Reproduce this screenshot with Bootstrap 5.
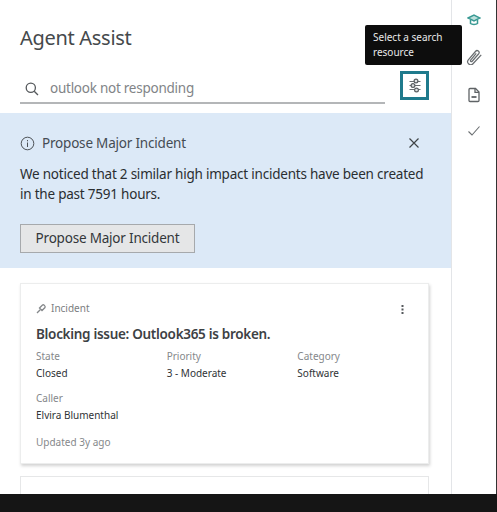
<!DOCTYPE html>
<html lang="en">
  <head>
    <meta charset="UTF-8" />
    <title>Agent Assist</title>
    <link rel="stylesheet" href="https://cdn.jsdelivr.net/npm/bootstrap@5.3.0/dist/css/bootstrap.min.css" />
    <style>
      html, body { height: 512px; overflow: hidden; background: #fff; }
      body { font-family: "Noto Sans", "Open Sans", sans-serif; color: #2f3436; }
      .frame { width: 497px; height: 494px; overflow: hidden; border-right: 1px solid #333; }
      .pane { width: 452px; height: 494px; border-right: 1px solid #e3e5e8; }
      .rail { width: 44px; padding-top: 13px; gap: 22px; }
      .rail svg { display: block; }
      .head { padding: 23px 20px 0; height: 113px; position: relative; }
      .title { font-size: 20px; line-height: 30px; color: #45494c; margin: 0; letter-spacing: -0.3px; }
      .searchrow { margin-top: 18px; gap: 15px; }
      .searchbox { width: 365px; height: 33px; border-bottom: 2px solid #b4b6b8; gap: 10px; padding-left: 4px; padding-top: 4px; }
      .searchtext { font-size: 13.5px; letter-spacing: -0.25px; color: #818487; }
      .filterbtn { width: 29px; height: 29px; border: 3px solid #1f7a8c; }
      .tip { position: absolute; left: 365px; top: 25px; width: 97px; height: 40px; background: #0d0d0d; border-radius: 2px; color: #e8e8e8; font-size: 10px; line-height: 15px; padding: 5px 8px; z-index: 2; }
      .banner { background: #dce9f7; height: 155px; padding: 20px 20px 0; }
      .bannerhead { font-size: 13.5px; letter-spacing: -0.2px; line-height: 20px; color: #454c53; gap: 7px; }
      .bannertext { font-size: 13.5px; line-height: 20px; margin: 11px 0 0; color: #2a2e31; width: 410px; letter-spacing: -0.22px; }
      .proposebtn { margin-top: 20px; width: 175px; height: 29px; padding: 0; background: #e5e6e7; border: 1px solid #a6a9ac; border-radius: 0; font-size: 13.5px; letter-spacing: -0.2px; color: #33373a; }
      .proposebtn:hover { background: #e5e6e7; }
      .closeicon { margin-right: 11px; }
      .cardbox { margin: 15px 0 0 20px; width: 409px; height: 181px; border: 1px solid #eceded; border-radius: 0; box-shadow: 1px 2px 3px rgba(0,0,0,.18); padding: 15px 15px 0; position: relative; }
      .nextbox { margin: 12px 0 0 20px; width: 409px; height: 40px; border: 1px solid #e6e7e8; border-radius: 0; }
      .kind { font-size: 10px; line-height: 18px; color: #7b7e81; gap: 4px; }
      .cardtitle { font-size: 13.5px; letter-spacing: -0.3px; line-height: 20px; font-weight: 600; margin: 7px 0 0; color: #3d4144; }
      .kebab { position: absolute; right: 24px; top: 21px; }
      .fields { margin-top: 4px; width: 392px; }
      .fieldcol { width: 131px; }
      .lbl { font-size: 10px; line-height: 16px; color: #85888b; }
      .val { font-size: 10px; line-height: 18px; color: #2f3336; }
      .updated { font-size: 10px; line-height: 16px; color: #85888b; margin-top: 10px; }
      .bottombar { height: 18px; background: #151515; }
    </style>
  </head>
  <body>
    <div class="frame d-flex">
      <main class="pane flex-shrink-0">
        <section class="head">
          <h1 class="title fw-normal">Agent Assist</h1>
          <div class="searchrow d-flex align-items-start">
            <div class="searchbox d-flex align-items-center">
              <svg width="16" height="16" viewBox="0 0 16 16" fill="none" stroke="#55595c" stroke-width="1.3">
                <circle cx="6.800" cy="6.800" r="4.600" />
                <path d="M10.200 10.200 14 14" />
              </svg>
              <span class="searchtext">outlook not responding</span>
            </div>
            <div class="filterbtn d-flex align-items-center justify-content-center">
              <svg width="14" height="15" viewBox="0 0 14 15" fill="none" stroke="#5a5e61" stroke-width="1.200">
                <path d="M1.500 3.500h11M1.500 7.500h11M1.500 11.500h11" stroke-width="0.900" />
                <circle cx="8" cy="3" r="1.900" fill="#dfe1e2" />
                <circle cx="5" cy="7.500" r="1.900" fill="#dfe1e2" />
                <circle cx="8.500" cy="12" r="1.900" fill="#dfe1e2" />
              </svg>
            </div>
          </div>
          <div class="tip">Select a search resource</div>
        </section>

        <section class="banner">
          <div class="bannerhead d-flex align-items-center">
            <svg width="15" height="15" viewBox="0 0 15 15" fill="none" stroke="#4e5358" stroke-width="1">
              <circle cx="7.500" cy="7.500" r="6.300" />
              <path d="M7.500 6.500v4.500M7.500 4v1.300" />
            </svg>
            <span class="flex-grow-1">Propose Major Incident</span>
            <svg class="closeicon" width="12" height="12" viewBox="0 0 12 12" fill="none" stroke="#3f4447" stroke-width="1.200">
              <path d="M1.500 1.500l9 9M10.500 1.500l-9 9" />
            </svg>
          </div>
          <p class="bannertext">We noticed that 2 similar high impact incidents have been created in the past 7591 hours.</p>
          <button type="button" class="btn proposebtn">Propose Major Incident</button>
        </section>

        <article class="card cardbox">
          <div class="kind d-flex align-items-center">
            <svg width="11" height="11" viewBox="0 0 11 11" fill="none" stroke="#85888b" stroke-width="1.300">
              <path d="M1 10l3.200-3.200" />
              <path d="M3.500 5 6.500 2c1-.8 3.300 1 2.500 2.500L6 7.500z" />
            </svg>
            <span>Incident</span>
          </div>
          <h2 class="cardtitle">Blocking issue: Outlook365 is broken.</h2>
          <svg class="kebab" width="3" height="9" viewBox="0 0 3 9" fill="#55595c">
            <rect x="0.500" y="0" width="2" height="2" />
            <rect x="0.500" y="3.500" width="2" height="2" />
            <rect x="0.500" y="7" width="2" height="2" />
          </svg>
          <div class="fields d-flex">
            <div class="fieldcol">
              <div class="lbl">State</div>
              <div class="val">Closed</div>
            </div>
            <div class="fieldcol">
              <div class="lbl">Priority</div>
              <div class="val">3 - Moderate</div>
            </div>
            <div class="fieldcol">
              <div class="lbl">Category</div>
              <div class="val">Software</div>
            </div>
          </div>
          <div class="mt-2">
            <div class="lbl">Caller</div>
            <div class="val">Elvira Blumenthal</div>
          </div>
          <div class="updated">Updated 3y ago</div>
        </article>
        <div class="card nextbox"></div>
      </main>

      <nav class="rail d-flex flex-column align-items-center">
        <svg width="14" height="14" viewBox="0 0 14 14" fill="none" stroke="#3a9a94" stroke-width="1.500">
          <path d="M1 5 7 2l6 3-6 3z" fill="#bfe0dc" />
          <path d="M3.500 7v3.500c1.500 1.300 5.500 1.300 7 0V7" />
        </svg>
        <svg width="16" height="16" viewBox="3 2 11 11.500" fill="none" stroke="#6a6e71" stroke-width="0.900">
          <path d="M13.700 6.200 7.600 12.800c-1.700 1.800-4.900-.9-3.200-3l5.300-6.200c1.100-1.300 3.300.4 2.200 1.800L7.200 10.800c-.6.700-1.600 0-1.100-.8l4-4.800" />
        </svg>
        <svg width="14" height="16" viewBox="0 0 14 16" fill="none" stroke="#5f6366" stroke-width="1.300">
          <path d="M2 2.500c0-.6.400-1 1-1h5.500L12 5v8.500c0 .6-.4 1-1 1H3c-.6 0-1-.4-1-1z" />
          <path d="M8 1.500V5.300h4" />
          <path d="M4.500 10h5" stroke-width="1.800" />
        </svg>
        <svg width="14" height="12" viewBox="0 0 14 12" fill="none" stroke="#6a6e71" stroke-width="1.100">
          <path d="M1.500 6.500 5 10l7.500-8.500" />
        </svg>
      </nav>
    </div>
    <div class="bottombar"></div>
    <script src="https://cdn.jsdelivr.net/npm/bootstrap@5.3.0/dist/js/bootstrap.bundle.min.js"></script>
  </body>
</html>
